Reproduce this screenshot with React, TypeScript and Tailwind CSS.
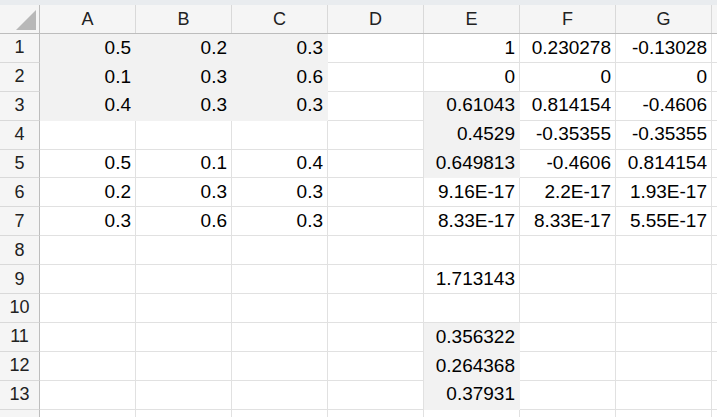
import React from "react";

const cols = ["A", "B", "C", "D", "E", "F", "G", "H"];
const data: Record<string, string> = {
  A1: "0.5", B1: "0.2", C1: "0.3", E1: "1", F1: "0.230278", G1: "-0.13028",
  A2: "0.1", B2: "0.3", C2: "0.6", E2: "0", F2: "0", G2: "0",
  A3: "0.4", B3: "0.3", C3: "0.3", E3: "0.61043", F3: "0.814154", G3: "-0.4606",
  E4: "0.4529", F4: "-0.35355", G4: "-0.35355",
  A5: "0.5", B5: "0.1", C5: "0.4", E5: "0.649813", F5: "-0.4606", G5: "0.814154",
  A6: "0.2", B6: "0.3", C6: "0.3", E6: "9.16E-17", F6: "2.2E-17", G6: "1.93E-17",
  A7: "0.3", B7: "0.6", C7: "0.3", E7: "8.33E-17", F7: "8.33E-17", G7: "5.55E-17",
  E9: "1.713143", E11: "0.356322", E12: "0.264368", E13: "0.37931",
};
const shaded = new Set(["A1","B1","C1","A2","B2","C2","A3","B3","C3","E3","E4","E5","E11","E12","E13"]);
const rows = Array.from({ length: 14 }, (_, i) => i + 1);

export default function App() {
  return (
    <div className="w-[717px] h-[417px] overflow-hidden bg-white text-black" style={{ fontFamily: '"Liberation Sans", Arial, sans-serif' }}>
      <div className="h-[5px] bg-[#e9ecef]" />
      <div className="flex h-[29px] bg-[#f5f5f5] border-b border-[#bdbdbd]">
        <div className="w-[40px] shrink-0 border-r border-[#bdbdbd] flex items-end justify-end p-[3px]">
          <svg width="20" height="20" viewBox="0 0 20 20"><polygon points="20,0 20,20 0,20" fill="#b8b8b8" /></svg>
        </div>
        {cols.map((c) => (
          <div key={c} className="w-[96px] shrink-0 border-r border-[#d9d9d9] flex items-center justify-center text-[18px] text-[#222]">{c === "H" ? "" : c}</div>
        ))}
      </div>
      {rows.map((r) => (
        <div key={r} className="flex h-[28.9px]">
          <div className="w-[40px] shrink-0 bg-[#f5f5f5] border-r border-b border-[#bdbdbd] border-b-[#d9d9d9] flex items-center justify-center text-[18px] text-[#222]">{r === 14 ? "" : r}</div>
          {cols.map((c) => {
            const id = c + r;
            const s = shaded.has(id);
            return (
              <div
                key={c}
                className={
                  "w-[96px] shrink-0 border-r border-b flex items-center justify-end pr-[4px] text-[19px] " +
                  (s ? "bg-[#f2f2f2] border-[#f2f2f2]" : "border-[#e1e1e1]")
                }
              >
                {data[id] ?? ""}
              </div>
            );
          })}
        </div>
      ))}
    </div>
  );
}
